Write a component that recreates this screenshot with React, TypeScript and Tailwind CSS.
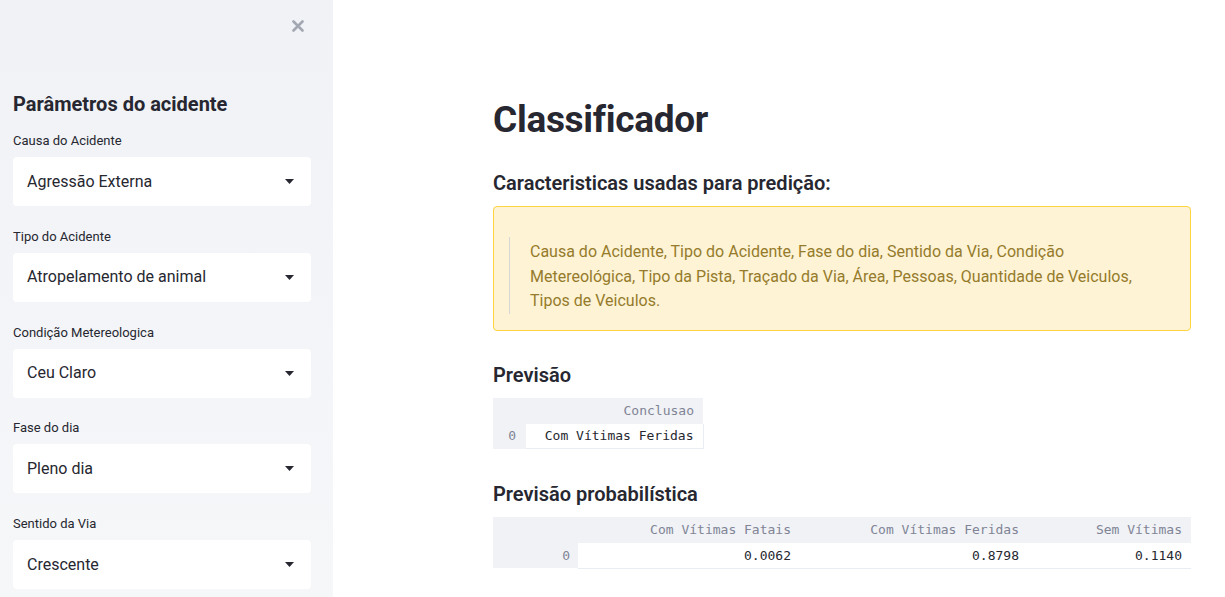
import React from "react";

const FIELDS = [
  { label: "Causa do Acidente", value: "Agressão Externa" },
  { label: "Tipo do Acidente", value: "Atropelamento de animal" },
  { label: "Condição Metereologica", value: "Ceu Claro" },
  { label: "Fase do dia", value: "Pleno dia" },
  { label: "Sentido da Via", value: "Crescente" },
];

const PROBS = [
  { name: "Com Vítimas Fatais", value: "0.0062", w: "w-[222px]" },
  { name: "Com Vítimas Feridas", value: "0.8798", w: "w-[228px]" },
  { name: "Sem Vítimas", value: "0.1140", w: "" },
];

const sans = "font-['Roboto','Noto_Sans',sans-serif]";
const mono = "font-['DejaVu_Sans_Mono','Liberation_Mono',monospace]";

function Caret() {
  return (
    <svg width="9" height="5" viewBox="0 0 9 5" className="shrink-0">
      <path d="M0 0h9L4.5 5z" fill="#262730" />
    </svg>
  );
}

function SelectBox({ label, value }: { label: string; value: string }) {
  return (
    <div className="mb-[22.75px]">
      <div className="text-[13px] leading-[16px] text-[#262730] mb-[8px]">{label}</div>
      <div className="h-[49px] bg-white rounded-[4px] flex items-center justify-between pl-[14px] pr-[17px]">
        <span className="text-[16px] text-[#262730]">{value}</span>
        <Caret />
      </div>
    </div>
  );
}

export default function App() {
  return (
    <div className={`flex w-[1225px] h-[597px] overflow-hidden bg-white ${sans}`}>
      {/* SIDEBAR */}
      <aside className="w-[333px] shrink-0 bg-gradient-to-b from-[#f0f2f6] to-[#f6f7f9] px-[13px] pr-[22px]">
        <div className="flex justify-end pt-[20px] pr-[7px]">
          <svg width="12" height="12" viewBox="0 0 12 12">
            <path d="M1.5 1.5l9 9M10.5 1.5l-9 9" stroke="#a3a7b1" strokeWidth="2.6" strokeLinecap="round" />
          </svg>
        </div>
        <h2 className="mt-[60px] text-[20px] leading-[24px] font-bold text-[#262730]">
          Parâmetros do acidente
        </h2>
        <div className="mt-[17px]">
          {FIELDS.map((f) => (
            <SelectBox key={f.label} label={f.label} value={f.value} />
          ))}
        </div>
      </aside>

      {/* MAIN */}
      <main className="flex-1 pl-[160px] pr-[34px] text-[#262730]">
        <h1 className="mt-[98px] text-[37px] leading-[44px] font-bold tracking-[-0.3px]">Classificador</h1>

        <h3 className="mt-[29px] text-[20px] leading-[24px] font-semibold">
          Caracteristicas usadas para predição:
        </h3>

        <div className="mt-[11px] border border-[#ffd43f] bg-[#fef3d5] rounded-[4px] pl-[15px] pt-[30px] pb-[16px]">
          <div className="border-l border-[#d6d6d6] pl-[20px] pt-[4px]">
            <p className="max-w-[630px] text-[16px] leading-[24.5px] text-[#957b2b] -mt-[1px]">
              Causa do Acidente, Tipo do Acidente, Fase do dia, Sentido da Via, Condição
              Metereológica, Tipo da Pista, Traçado da Via, Área, Pessoas, Quantidade de Veiculos,
              Tipos de Veiculos.
            </p>
          </div>
        </div>

        <h3 className="mt-[32px] text-[20px] leading-[24px] font-semibold">Previsão</h3>

        <table className={`mt-[11px] border-collapse text-[13px] ${mono}`}>
          <thead>
            <tr className="h-[26px] bg-[#f0f2f6]">
              <th className="w-[33px]"></th>
              <th className="w-[177px] text-right font-normal text-[#808495] pr-[9px]">Conclusao</th>
            </tr>
          </thead>
          <tbody>
            <tr className="h-[25px]">
              <td className="bg-[#f0f2f6] text-[#808495] text-right pr-[10px]">0</td>
              <td className="text-right pr-[9px] text-[#262730] border-b border-r border-[#e9ecf2]">
                Com Vítimas Feridas
              </td>
            </tr>
          </tbody>
        </table>

        <h3 className="mt-[33px] text-[20px] leading-[24px] font-semibold">Previsão probabilística</h3>

        <table className={`mt-[11px] w-full border-collapse text-[13px] ${mono}`}>
          <thead>
            <tr className="h-[26px] bg-[#f0f2f6]">
              <th className="w-[85px]"></th>
              {PROBS.map((p) => (
                <th key={p.name} className={`${p.w} text-right font-normal text-[#808495] pr-[9px]`}>
                  {p.name}
                </th>
              ))}
            </tr>
          </thead>
          <tbody>
            <tr className="h-[25px]">
              <td className="bg-[#f0f2f6] text-[#808495] text-right pr-[8px]">0</td>
              {PROBS.map((p) => (
                <td key={p.name} className="text-right pr-[9px] text-[#262730] border-b border-[#e9ecf2]">
                  {p.value}
                </td>
              ))}
            </tr>
          </tbody>
        </table>
      </main>
    </div>
  );
}
